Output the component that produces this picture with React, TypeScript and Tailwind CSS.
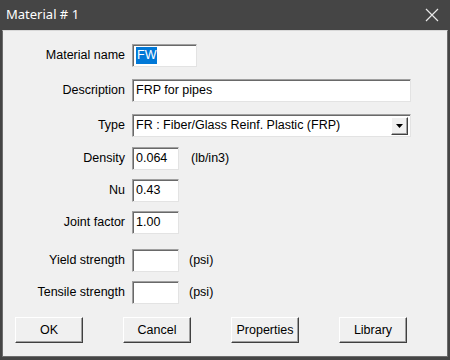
import React from 'react'

const font = { fontFamily: '"Liberation Sans", Arial, sans-serif' }

const inputCls =
  'h-[23px] bg-white border-t border-l border-[#a0a0a0] border-r-[#e3e3e3] border-b-[#e3e3e3] border-r border-b shadow-[inset_1px_1px_0_#696969] flex items-center pl-[3px] text-[12.5px] text-black'

const btnCls =
  'w-[68px] h-[26px] bg-[#f0f0f0] border border-t-white border-l-white border-r-[#404040] border-b-[#404040] shadow-[inset_-1px_-1px_0_#a0a0a0] text-[12.5px] text-black flex items-center justify-center'

function Row({ label, mt, children }: { label: string; mt: string; children: React.ReactNode }) {
  return (
    <div className={`flex items-center h-[23px] ${mt}`}>
      <div className="w-[122px] text-right text-[12.5px] text-black">{label}</div>
      <div className="ml-[7px] flex items-center">{children}</div>
    </div>
  )
}

export default function App() {
  return (
    <div className="w-[450px] h-[360px] bg-[#454545] flex flex-col" style={font}>
      {/* title bar */}
      <div className="h-[30px] flex items-center justify-between pl-[6px] pr-[11px]">
        <span className="text-white text-[13px]" style={{ fontFamily: '"Noto Sans", "Open Sans", sans-serif' }}>
          Material # 1
        </span>
        <svg width="14" height="14" viewBox="0 0 14 14">
          <path d="M1 1 L13 13 M13 1 L1 13" stroke="#e8e8e8" strokeWidth="1.2" fill="none" />
        </svg>
      </div>

      {/* client area */}
      <div className="mx-[2px] mb-[3px] flex-1 bg-[#f0f0f0] border border-[#6d6d6d] border-t-[#d8d8d8] pt-[13px]">
        <Row label="Material name" mt="mt-0">
          <div className={`${inputCls} w-[65px]`}>
            <span className="bg-[#0078d7] text-white px-[1px] leading-[17px]">FW</span>
          </div>
        </Row>

        <Row label="Description" mt="mt-[12px]">
          <div className={`${inputCls} w-[279px]`}>FRP for pipes</div>
        </Row>

        <Row label="Type" mt="mt-[12px]">
          <div className={`${inputCls} w-[279px] justify-between pr-[2px]`}>
            <span>FR : Fiber/Glass Reinf. Plastic (FRP)</span>
            <div className="w-[17px] h-[18px] bg-[#f0f0f0] border border-t-white border-l-white border-r-[#404040] border-b-[#404040] shadow-[inset_-1px_-1px_0_#a0a0a0] flex items-center justify-center">
              <svg width="7" height="4" viewBox="0 0 7 4">
                <path d="M0 0 H7 L3.5 4 Z" fill="#000" />
              </svg>
            </div>
          </div>
        </Row>

        <Row label="Density" mt="mt-[10px]">
          <div className={`${inputCls} w-[47px]`}>0.064</div>
          <span className="ml-[12px] text-[12.5px] text-black">(lb/in3)</span>
        </Row>

        <Row label="Nu" mt="mt-[9px]">
          <div className={`${inputCls} w-[47px]`}>0.43</div>
        </Row>

        <Row label="Joint factor" mt="mt-[9px]">
          <div className={`${inputCls} w-[47px]`}>1.00</div>
        </Row>

        <Row label="Yield strength" mt="mt-[15px]">
          <div className={`${inputCls} w-[47px]`}></div>
          <span className="ml-[10px] text-[12.5px] text-black">(psi)</span>
        </Row>

        <Row label="Tensile strength" mt="mt-[9px]">
          <div className={`${inputCls} w-[47px]`}></div>
          <span className="ml-[10px] text-[12.5px] text-black">(psi)</span>
        </Row>

        <div className="flex mt-[13px] pl-[12px] gap-[40px]">
          <button className={`${btnCls} border-[#000] border-t-white border-l-white`}>OK</button>
          <button className={btnCls}>Cancel</button>
          <button className={btnCls}>Properties</button>
          <button className={btnCls}>Library</button>
        </div>
      </div>
    </div>
  )
}
